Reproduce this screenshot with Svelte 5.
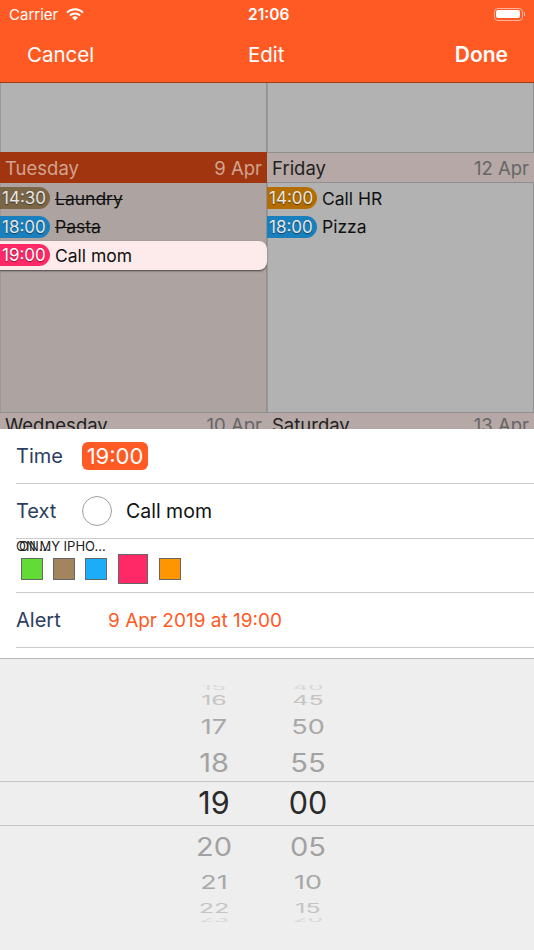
<script>
    const days = [
        {
            name: 'Tuesday', date: '9 Apr', active: true,
            items: [
                { time: '14:30', text: 'Laundry', color: '#7a6547', done: true },
                { time: '18:00', text: 'Pasta', color: '#1a80bd', done: true },
                { time: '19:00', text: 'Call mom', color: '#ff2968', selected: true }
            ]
        },
        {
            name: 'Friday', date: '12 Apr',
            items: [
                { time: '14:00', text: 'Call HR', color: '#b36d00' },
                { time: '18:00', text: 'Pizza', color: '#1a80bd' }
            ]
        }
    ];

    const nextDays = [
        { name: 'Wednesday', date: '10 Apr' },
        { name: 'Saturday', date: '13 Apr' }
    ];

    const swatches = [
        { color: '#62db37' },
        { color: '#a2845e' },
        { color: '#1badf8' },
        { color: '#ff2968', selected: true },
        { color: '#ff9500' }
    ];

    // height = row height, size = font size, scale = drum squash, tone = text colour
    const wheel = [
        { h: '15', m: '40', height: 6, size: 24, scale: 0.3, tone: '#d8d8d8' },
        { h: '16', m: '45', height: 18, size: 25, scale: 0.55, tone: '#c4c4c4' },
        { h: '17', m: '50', height: 34, size: 27, scale: 0.74, tone: '#a8a8a8' },
        { h: '18', m: '55', height: 38, size: 29, scale: 0.88, tone: '#a2a2a2' },
        { h: '19', m: '00', height: 45, size: 30.5, scale: 1, tone: '#2a2a2a', selected: true },
        { h: '20', m: '05', height: 40, size: 29, scale: 0.88, tone: '#a2a2a2' },
        { h: '21', m: '10', height: 32, size: 27, scale: 0.7, tone: '#a8a8a8' },
        { h: '22', m: '15', height: 20, size: 25, scale: 0.5, tone: '#c4c4c4' },
        { h: '23', m: '20', height: 4, size: 24, scale: 0.3, tone: '#d8d8d8' }
    ];
</script>

<div class="screen">
    <header class="topbar">
        <div class="status">
            <div class="status-left">
                <span>Carrier</span>
                <svg width="18" height="13" viewBox="0 0 18 13" aria-hidden="true">
                    <path d="M1 4.6a11.4 11.4 0 0 1 16 0" fill="none" stroke="#fff" stroke-width="2" />
                    <path d="M3.9 7.5a7.3 7.3 0 0 1 10.2 0" fill="none" stroke="#fff" stroke-width="2" />
                    <path d="M6.1 9.6a4.2 4.2 0 0 1 5.8 0L9 12.6z" fill="#fff" />
                </svg>
            </div>
            <span class="clock">21:06</span>
            <div class="battery">
                <div class="battery-body"><div class="battery-fill"></div></div>
                <div class="battery-tip"></div>
            </div>
        </div>
        <nav class="navbar">
            <span class="nav-btn">Cancel</span>
            <span class="nav-title">Edit</span>
            <span class="nav-btn nav-done">Done</span>
        </nav>
    </header>

    <section class="calendar">
        <div class="cal-col"><div class="spacer"></div></div>
        <div class="cal-col"><div class="spacer"></div></div>

        {#each days as day}
            <div class="day" class:tint={day.active}>
                <div class="day-head" class:active={day.active}>
                    <span class="day-name">{day.name}</span>
                    <span class="day-date">{day.date}</span>
                </div>
                <ul class="items">
                    {#each day.items as item}
                        <li class="item" class:selected={item.selected}>
                            <span class="pill" style="background: {item.color}">{item.time}</span>
                            <span class="item-text" class:done={item.done}>{item.text}</span>
                        </li>
                    {/each}
                </ul>
            </div>
        {/each}

        {#each nextDays as day}
            <div class="day-head next">
                <span class="day-name">{day.name}</span>
                <span class="day-date">{day.date}</span>
            </div>
        {/each}
    </section>

    <section class="form">
        <div class="row">
            <span class="label">Time</span>
            <span class="time-pill">19:00</span>
        </div>
        <div class="row">
            <span class="label">Text</span>
            <span class="circle"></span>
            <span class="text-value">Call mom</span>
        </div>
        <div class="row colors">
            <div class="calendar-name">
                <span>ON MY IPHO...</span>
                <span class="overlap">ON...</span>
            </div>
            <div class="swatches">
                {#each swatches as swatch}
                    <span class="swatch" class:selected={swatch.selected} style="background: {swatch.color}"></span>
                {/each}
            </div>
        </div>
        <div class="row">
            <span class="label">Alert</span>
            <span class="alert-value">9 Apr 2019 at 19:00</span>
        </div>
    </section>

    <section class="picker">
        {#each wheel as row}
            <div class="wheel-row" class:selected={row.selected} style="height: {row.height}px; color: {row.tone}; font-size: {row.size}px">
                <span class="wheel-cell" style="transform: scaleY({row.scale})">{row.h}</span>
                <span class="wheel-cell" style="transform: scaleY({row.scale})">{row.m}</span>
            </div>
        {/each}
    </section>
</div>

<style>
    :global(body) {
        margin: 0;
        background: #eeeeee;
    }

    .screen {
        width: 534px;
        height: 950px;
        overflow: hidden;
        font-family: Inter, "Liberation Sans", sans-serif;
        display: flex;
        flex-direction: column;
    }

    .topbar {
        height: 83px;
        box-sizing: border-box;
        flex: none;
        background: #ff5a23;
        border-bottom: 1px solid #a03c18;
        color: #ffffff;
    }

    .status {
        height: 28px;
        padding: 0 9px;
        display: flex;
        align-items: center;
        justify-content: space-between;
        font-size: 15px;
        position: relative;
    }

    .status-left {
        display: flex;
        align-items: center;
        gap: 8px;
    }

    .clock {
        font-weight: 600;
        font-size: 15.5px;
        position: absolute;
        left: 248px;
    }

    .battery {
        display: flex;
        align-items: center;
        gap: 1px;
    }

    .battery-body {
        width: 29px;
        height: 13px;
        box-sizing: border-box;
        border: 1px solid rgba(255, 255, 255, 0.55);
        border-radius: 4px;
        padding: 1.5px;
    }

    .battery-fill {
        height: 100%;
        background: #ffffff;
        border-radius: 2px;
    }

    .battery-tip {
        width: 1.5px;
        height: 4px;
        background: rgba(255, 255, 255, 0.55);
    }

    .navbar {
        height: 53px;
        padding: 0 26px 0 27px;
        display: flex;
        align-items: center;
        justify-content: space-between;
        font-size: 20.5px;
        position: relative;
    }

    .nav-title {
        position: absolute;
        left: 248px;
    }

    .nav-done {
        font-weight: 600;
        font-size: 21px;
    }

    .calendar {
        height: 346px;
        flex: none;
        overflow: hidden;
        display: grid;
        grid-template-columns: 267px 267px;
        grid-template-rows: 69px 260px 1fr;
        background: #b2b2b2;
    }

    .cal-col {
        border-right: 1px solid #8f8f8f;
        border-left: 1px solid #9a9a9a;
    }

    .spacer {
        height: 100%;
    }

    .day {
        border-right: 1px solid #8f8f8f;
        border-left: 1px solid #9a9a9a;
        box-sizing: border-box;
        min-width: 0;
    }

    .day.tint {
        background: #ada3a0;
    }

    .day-head {
        height: 31px;
        box-sizing: border-box;
        padding: 0 5px;
        margin: 0 -1px;
        display: flex;
        align-items: center;
        justify-content: space-between;
        background: #b5a8a6;
        border-top: 1px solid #8f8f8f;
        border-bottom: 1px solid #8f8f8f;
        font-size: 18.5px;
    }

    .day-head.active {
        background: #a0350f;
        border-color: #a0350f;
    }

    .day-head.active .day-name,
    .day-head.active .day-date {
        color: #d2a392;
    }

    .day-head.next {
        margin: 0;
        height: 34px;
        align-items: flex-start;
        padding-top: 1px;
        background: #b5a8a6;
        border-bottom: none;
    }

    .day-name {
        color: #1f1f1f;
    }

    .day-date {
        color: #666666;
    }

    .items {
        list-style: none;
        margin: 0;
        padding: 1px 0 0;
    }

    .item {
        height: 28.5px;
        display: flex;
        align-items: center;
        gap: 5px;
        margin-left: -1px;
        margin-right: -1px;
        font-size: 17.5px;
        color: #111111;
    }

    .item.selected {
        background: #fdeaea;
        border-radius: 0 8px 8px 0;
        box-shadow: 0 1px 2px rgba(0, 0, 0, 0.6);
    }

    .pill {
        width: 50px;
        height: 22px;
        box-sizing: border-box;
        padding-left: 2px;
        line-height: 22px;
        font-size: 17px;
        border-radius: 0 11px 11px 0;
        color: #e6e6e6;
        text-shadow: 0 1px 1px rgba(0, 0, 0, 0.5);
        flex: none;
    }

    .item.selected .pill {
        color: #ffffff;
    }

    .item-text.done {
        text-decoration: line-through;
        text-decoration-thickness: 1px;
    }

    .form {
        height: 230px;
        flex: none;
        box-sizing: border-box;
        background: #ffffff;
        border-bottom: 1px solid #b8b8b8;
    }

    .row {
        height: 55px;
        box-sizing: border-box;
        margin-left: 16px;
        display: flex;
        align-items: center;
        border-bottom: 1px solid #cccccc;
        position: relative;
    }

    .label {
        width: 66px;
        flex: none;
        font-size: 20px;
        color: #2c3e60;
    }

    .time-pill {
        width: 66px;
        height: 28px;
        line-height: 28px;
        text-align: center;
        border-radius: 6px;
        background: #ff5a23;
        color: #ffffff;
        font-size: 22px;
    }

    .circle {
        width: 30px;
        height: 30px;
        box-sizing: border-box;
        border: 1px solid #a0a0a0;
        border-radius: 50%;
        margin-right: 14px;
    }

    .text-value {
        font-size: 19.5px;
        color: #111111;
    }

    .row.colors {
        display: block;
        height: 54px;
    }

    .calendar-name {
        position: relative;
        height: 14px;
        font-size: 13px;
        line-height: 14px;
        color: #222222;
        white-space: nowrap;
    }

    .overlap {
        position: absolute;
        left: 3px;
        top: 0;
    }

    .swatches {
        display: flex;
        align-items: center;
        gap: 10px;
        margin-left: 5px;
        margin-top: 1px;
        height: 30px;
    }

    .swatch {
        width: 22px;
        height: 22px;
        box-sizing: border-box;
        border: 1px solid #666666;
    }

    .swatch.selected {
        width: 30px;
        height: 30px;
        margin: 0 1px;
    }

    .alert-value {
        margin-left: 26px;
        font-size: 19px;
        color: #ff5a23;
    }

    .picker {
        flex: 1;
        background: #eeeeee;
        padding-top: 26px;
    }

    .wheel-row {
        display: grid;
        grid-template-columns: 94px 94px;
        padding-left: 167px;
        align-items: center;
        align-content: center;
        justify-items: center;
        overflow: hidden;
        box-sizing: border-box;
        line-height: 1;
    }

    .wheel-row.selected {
        border-top: 1px solid #c4c4c4;
        border-bottom: 1px solid #c4c4c4;
    }
</style>
